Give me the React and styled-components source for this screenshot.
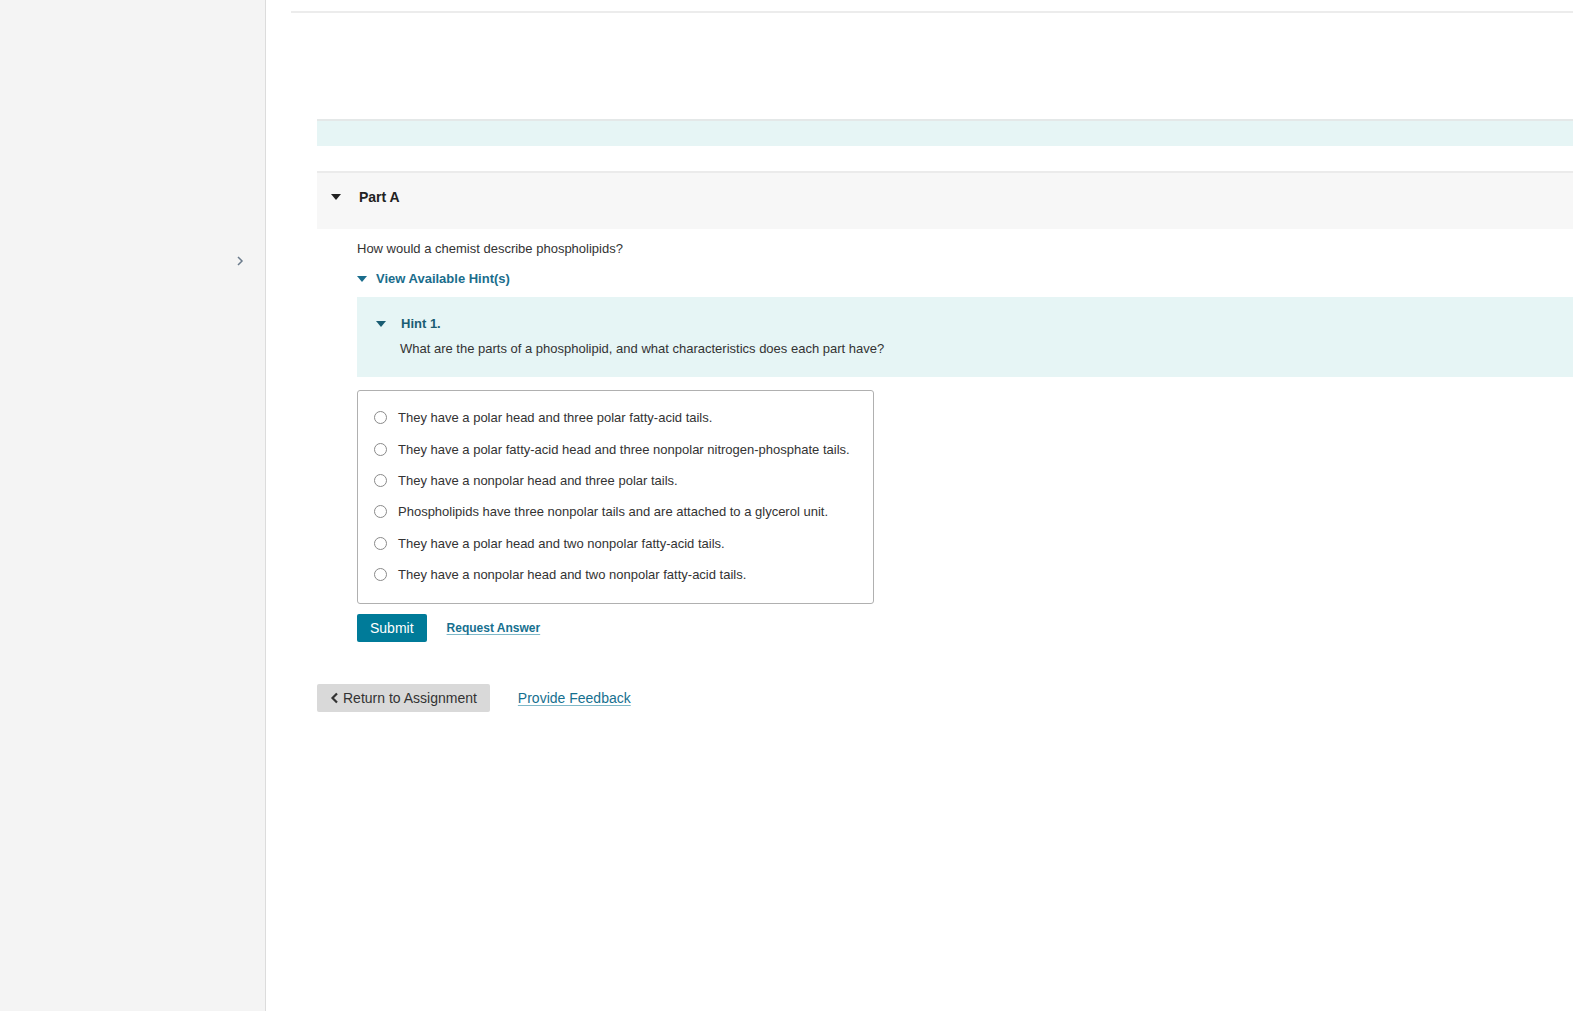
import React from 'react'
import styled, { createGlobalStyle } from 'styled-components'

const GlobalStyle = createGlobalStyle`
    html, body {
        margin: 0;
        padding: 0;
        background: #fff;
    }
    body {
        font-family: "Liberation Sans", Arial, sans-serif;
        color: #333;
    }
`

const Page = styled.div`
    display: flex;
    min-height: 1011px;
`

const Sidebar = styled.aside`
    width: 266px;
    flex: none;
    background: #f4f4f4;
    border-right: 1px solid #dcdcdc;
    display: flex;
    justify-content: flex-end;
    padding-top: 253px;
    box-sizing: border-box;
`

const SideToggle = styled.span`
    width: 16px;
    height: 16px;
    margin-right: 17px;
    color: #6b7b8c;
    display: flex;
    align-items: center;
    justify-content: center;
`

const Main = styled.main`
    flex: 1;
    padding: 11px 0 0 25px;
    min-width: 0;
`

const TopRule = styled.div`
    height: 2px;
    background: #ececec;
`

const Content = styled.div`
    padding: 106px 0 0 26px;
`

const Banner = styled.div`
    height: 25px;
    background: #e6f5f5;
    border-top: 2px solid #e4e8e8;
`

const PartHeader = styled.div`
    margin-top: 25px;
    height: 58px;
    box-sizing: border-box;
    background: #f7f7f7;
    border-top: 2px solid #ebebeb;
    display: flex;
    align-items: center;
    padding: 0 0 9px 14px;
    gap: 18px;
    font-size: 14px;
    font-weight: bold;
    color: #222;
`

const Caret = styled.span`
    width: 0;
    height: 0;
    border-left: ${p => p.$size || 5}px solid transparent;
    border-right: ${p => p.$size || 5}px solid transparent;
    border-top: ${p => (p.$size || 5) + 1}px solid ${p => p.$color || '#222'};
    display: inline-block;
`

const Body = styled.div`
    padding-left: 40px;
`

const Question = styled.p`
    margin: 12px 0 0;
    font-size: 13px;
    line-height: 16px;
    color: #333;
`

const HintToggle = styled.div`
    margin-top: 14px;
    display: flex;
    align-items: center;
    gap: 9px;
    font-size: 13px;
    font-weight: bold;
    color: #1a6d8c;
    line-height: 16px;
`

const HintBox = styled.div`
    margin-top: 10px;
    background: #e6f5f5;
    padding: 19px 0 20px 19px;
`

const HintTitle = styled.div`
    display: flex;
    align-items: center;
    gap: 15px;
    font-size: 13px;
    font-weight: bold;
    color: #1a5d73;
    line-height: 16px;
`

const HintText = styled.p`
    margin: 9px 0 0 24px;
    font-size: 13px;
    line-height: 16px;
    color: #333;
`

const Choices = styled.div`
    margin-top: 13px;
    width: 517px;
    box-sizing: border-box;
    border: 1px solid #b0b0b0;
    border-radius: 3px;
    padding: 11px 0 13px 16px;
`

const Choice = styled.label`
    display: flex;
    align-items: center;
    gap: 11px;
    height: 31.4px;
    font-size: 13px;
    color: #333;
`

const Radio = styled.span`
    width: 11px;
    height: 11px;
    border: 1px solid #8a8a8a;
    border-radius: 50%;
    background: #fff;
    flex: none;
`

const Actions = styled.div`
    margin-top: 10px;
    display: flex;
    align-items: center;
    gap: 20px;
`

const SubmitButton = styled.button`
    height: 28px;
    padding: 0 13px;
    background: #007b99;
    color: #fff;
    border: none;
    border-radius: 2px;
    font-family: inherit;
    font-size: 14px;
`

const TextLink = styled.a`
    color: #16708f;
    font-size: ${p => p.$size || 13}px;
    font-weight: ${p => (p.$bold ? 'bold' : 'normal')};
    text-decoration: underline;
    text-decoration-color: #7fb8c8;
    text-underline-offset: 2px;
`

const Footer = styled.div`
    margin-top: 42px;
    display: flex;
    align-items: center;
    gap: 28px;
`

const BackButton = styled.button`
    height: 28px;
    padding: 0 13px 0 13px;
    background: #d9d9d9;
    color: #333;
    border: none;
    border-radius: 2px;
    font-family: inherit;
    font-size: 14px;
    display: flex;
    align-items: center;
    gap: 3px;
`

const choices = [
    'They have a polar head and three polar fatty-acid tails.',
    'They have a polar fatty-acid head and three nonpolar nitrogen-phosphate tails.',
    'They have a nonpolar head and three polar tails.',
    'Phospholipids have three nonpolar tails and are attached to a glycerol unit.',
    'They have a polar head and two nonpolar fatty-acid tails.',
    'They have a nonpolar head and two nonpolar fatty-acid tails.',
]

const App = () => {
    return (
        <>
        <GlobalStyle />
        <Page>
            <Sidebar>
                <SideToggle>
                    <svg width="10" height="12" viewBox="0 0 10 12">
                        <path d="M3 2 L7 6 L3 10" fill="none" stroke="currentColor" strokeWidth="1.5" />
                    </svg>
                </SideToggle>
            </Sidebar>
            <Main>
                <TopRule />
                <Content>
                    <Banner />
                    <PartHeader>
                        <Caret $size={5} $color="#222" />
                        <span>Part A</span>
                    </PartHeader>
                    <Body>
                        <Question>How would a chemist describe phospholipids?</Question>
                        <HintToggle>
                            <Caret $size={5} $color="#1a6d8c" />
                            <span>View Available Hint(s)</span>
                        </HintToggle>
                        <HintBox>
                            <HintTitle>
                                <Caret $size={5} $color="#1a5d73" />
                                <span>Hint 1.</span>
                            </HintTitle>
                            <HintText>What are the parts of a phospholipid, and what characteristics does each part have?</HintText>
                        </HintBox>
                        <Choices>
                            {choices.map(text => (
                                <Choice key={text}>
                                    <Radio />
                                    <span>{text}</span>
                                </Choice>
                            ))}
                        </Choices>
                        <Actions>
                            <SubmitButton>Submit</SubmitButton>
                            <TextLink href="#" $bold $size={12}>Request Answer</TextLink>
                        </Actions>
                    </Body>
                    <Footer>
                        <BackButton>
                            <svg width="10" height="12" viewBox="0 0 10 12">
                                <path d="M7 1.5 L2.5 6 L7 10.5" fill="none" stroke="#333" strokeWidth="2.2" />
                            </svg>
                            <span>Return to Assignment</span>
                        </BackButton>
                        <TextLink href="#" $size={14}>Provide Feedback</TextLink>
                    </Footer>
                </Content>
            </Main>
        </Page>
        </>
    )
}

export default App
